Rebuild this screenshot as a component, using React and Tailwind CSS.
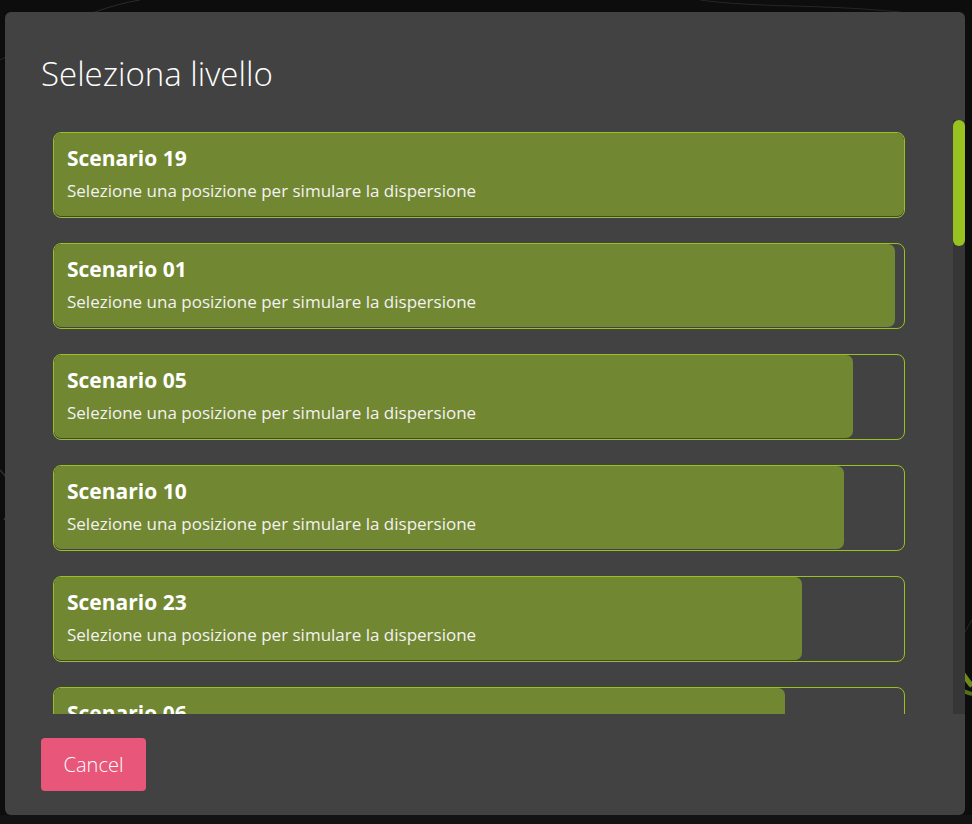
const scenarios = [
    { name: "Scenario 19", fill: 850 },
    { name: "Scenario 01", fill: 841 },
    { name: "Scenario 05", fill: 799 },
    { name: "Scenario 10", fill: 790 },
    { name: "Scenario 23", fill: 748 },
    { name: "Scenario 06", fill: 731 },
];

const ScenarioCard = ({ scenario }) => {
    return (
        <div className="relative h-[86px] shrink-0 rounded-[8px] border border-[#97c21f] overflow-hidden">
            <div className="absolute left-0 top-0 bottom-[1px] rounded-[7px] bg-[#728731]" style={{ width: scenario.fill }} />
            <div className="relative pl-[13px] pr-[12px] pt-[12px]">
                <h5 className="text-[21px] leading-[27px] font-bold text-white">{scenario.name}</h5>
                <p className="mt-[7px] text-[17px] leading-[23px] text-[#f2f2f2]">Selezione una posizione per simulare la dispersione</p>
            </div>
        </div>
    );
};

const App = () => {
    return (
        <div className="relative w-[972px] h-[824px] overflow-hidden bg-[#0d0d0d] font-['Open_Sans',sans-serif]">
            <svg className="absolute inset-0" width="972" height="824" viewBox="0 0 972 824" fill="none">
                <path d="M0 60 C40 40 80 10 140 0" stroke="#2a2a2a" strokeWidth="1" />
                <path d="M700 0 C760 8 820 4 900 12" stroke="#262626" strokeWidth="1" />
                <path d="M0 470 C10 480 20 500 4 520" stroke="#333" strokeWidth="1.5" />
                <path d="M960 640 L972 620" stroke="#2a2a2a" strokeWidth="1" />
                <path d="M960 670 C966 678 970 684 972 686" stroke="#6d8a1c" strokeWidth="5" />
                <path d="M960 690 L972 694" stroke="#55701a" strokeWidth="4" />
                <rect x="0" y="815" width="972" height="9" fill="#131313" />
            </svg>
            <div className="relative pl-[5px] pt-[12px]">
                <div className="w-[960px] h-[803px] rounded-[6px] bg-[#424242] flex flex-col overflow-hidden">
                    <div className="h-[108px] shrink-0 pl-[36px] pt-[42px]">
                        <h2 className="text-[33px] leading-[40px] font-light text-white">Seleziona livello</h2>
                    </div>
                    <div className="h-[594px] shrink-0 flex">
                        <div className="flex-1 overflow-hidden px-[48px] pt-[12px] flex flex-col gap-[25px]">
                            {scenarios.map((s) => (
                                <ScenarioCard key={s.name} scenario={s} />
                            ))}
                        </div>
                        <div className="w-[12px] shrink-0 bg-[#363636]">
                            <div className="h-[126px] rounded-full bg-[#97c21f]" />
                        </div>
                    </div>
                    <div className="flex-1 pl-[36px] pt-[24px]">
                        <button className="w-[105px] h-[53px] rounded-[4px] bg-[#e8567a] text-[20px] font-light text-white">
                            Cancel
                        </button>
                    </div>
                </div>
            </div>
        </div>
    );
};

export default App;
